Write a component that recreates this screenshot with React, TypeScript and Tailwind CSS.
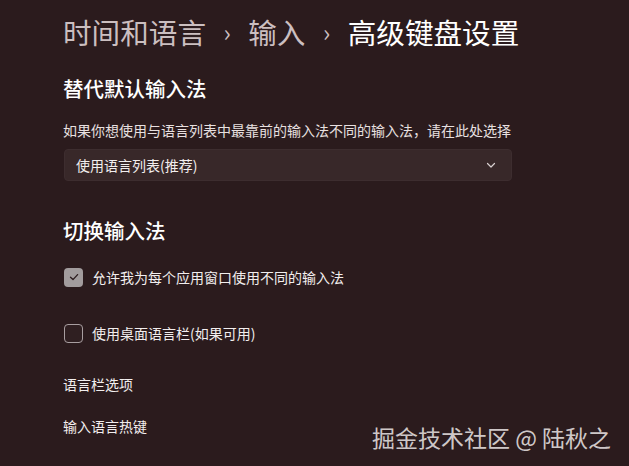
import React from "react";

const font = { fontFamily: '"Noto Sans CJK SC", "Noto Sans", sans-serif' };

export default function App() {
  return (
    <div
      className="w-[629px] h-[466px] bg-[#2b1b1d] text-white overflow-hidden relative"
      style={font}
    >
      <div className="pl-[63px] pt-[12px] flex flex-col">
        <div className="flex items-center h-[40px] text-[28.6px] leading-[40px]">
          <span className="text-[#cbbfc0]">时间和语言</span>
          <span className="text-[#cbbfc0] text-[24px] mx-[17.5px]">›</span>
          <span className="text-[#cbbfc0]">输入</span>
          <span className="text-[#cbbfc0] text-[24px] mx-[17.5px]">›</span>
          <span className="text-white">高级键盘设置</span>
        </div>

        <div className="mt-[22px] text-[20.5px] leading-[28px] font-medium">替代默认输入法</div>
        <div className="mt-[18px] text-[14px] leading-[20px] text-[#e8e0e0]">
          如果你想使用与语言列表中最靠前的输入法不同的输入法，请在此处选择
        </div>
        <div className="mt-[9px] ml-[1px] w-[448px] h-[32px] rounded-[4px] bg-[#382829] border border-[#3d2d2f] flex items-center justify-between px-[11px]">
          <span className="text-[14px] leading-[20px] text-[#f2eeee]">使用语言列表(推荐)</span>
          <svg width="12" height="12" viewBox="0 0 12 12" className="mr-[3px]">
            <path d="M2.5 4.5 L6 8 L9.5 4.5" stroke="#d8d0d0" strokeWidth="1.2" fill="none" strokeLinecap="round" strokeLinejoin="round" />
          </svg>
        </div>

        <div className="mt-[35px] text-[20.5px] leading-[28px] font-medium">切换输入法</div>

        <div className="mt-[23px] flex items-center h-[20px]">
          <div className="ml-[1px] w-[19px] h-[19px] rounded-[4px] bg-[#a29c9d] flex items-center justify-center">
            <svg width="12" height="12" viewBox="0 0 12 12">
              <path d="M2.5 6.3 L5 8.6 L9.6 3.6" stroke="#2b1b1d" strokeWidth="1.3" fill="none" strokeLinecap="round" strokeLinejoin="round" />
            </svg>
          </div>
          <span className="ml-[9px] text-[14px] leading-[20px] text-[#f2eeee]">允许我为每个应用窗口使用不同的输入法</span>
        </div>

        <div className="mt-[36px] flex items-center h-[20px]">
          <div className="ml-[1px] w-[19px] h-[19px] rounded-[4px] border border-[#a89ea0] bg-[#2f1f21]" />
          <span className="ml-[9px] text-[14px] leading-[20px] text-[#f2eeee]">使用桌面语言栏(如果可用)</span>
        </div>

        <div className="mt-[31px] text-[14px] leading-[20px] text-[#f2eeee]">语言栏选项</div>
        <div className="mt-[22px] text-[14px] leading-[20px] text-[#f2eeee]">输入语言热键</div>
      </div>

      <div className="absolute left-[372px] top-[422px] text-[23px] leading-[30px] text-[#e6e0e0]/90">
        掘金技术社区 @ 陆秋之
      </div>
    </div>
  );
}
